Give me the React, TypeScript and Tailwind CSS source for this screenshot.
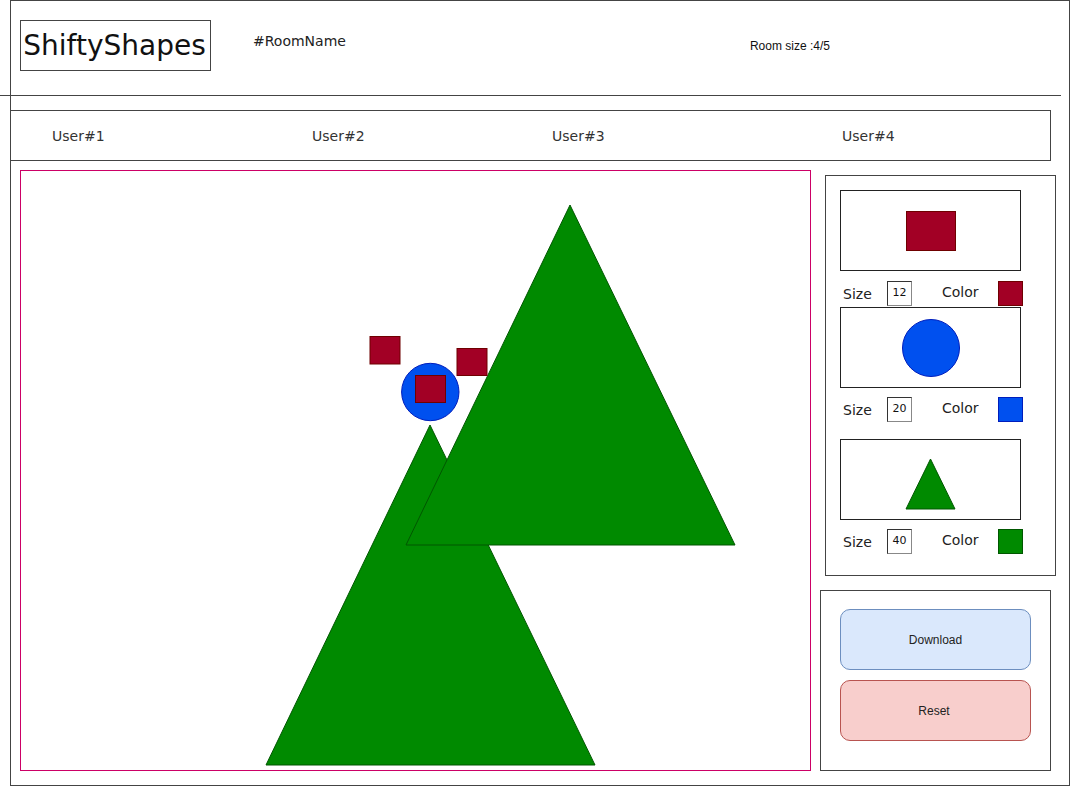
import React from 'react';

const sans = { fontFamily: '"DejaVu Sans", Verdana, sans-serif' };
const arial = { fontFamily: '"Liberation Sans", Arial, sans-serif' };

function SizeRow({ size, color }: { size: number; color: string }) {
  return (
    <div className="flex h-[25px] items-center text-[14px] text-[#222]" style={sans}>
      <span className="ml-[3px] w-[44px] pt-[1px]">Size</span>
      <span className="flex h-[25px] w-[25px] items-center justify-center border border-[#333] border-b-[#888] border-r-[#888] text-[11px] text-[#111]">
        {size}
      </span>
      <span className="ml-[30px] w-[56px] pb-[3px]">Color</span>
      <span className={`h-[25px] w-[25px] border ${color}`} />
    </div>
  );
}

export default function App() {
  return (
    <div className="relative h-[786px] w-[1071px] overflow-hidden bg-white text-[#222]">
      <div className="ml-[10px] h-[786px] w-[1060px] border border-[#444]">
        {/* header */}
        <div className="-ml-[11px] flex h-[95px] w-[1061px] items-start border-b border-[#444] pl-[11px]">
          <div
            className="ml-[9px] mt-[19px] flex h-[51px] w-[191px] items-center justify-center border border-[#444] pr-[2px] text-[28px] leading-none text-[#111]"
            style={sans}
          >
            ShiftyShapes
          </div>
          <span className="ml-[42px] mt-[30px] text-[14px]" style={sans}>
            #RoomName
          </span>
          <span className="ml-[404px] mt-[36px] text-[12px] text-[#111]" style={arial}>
            Room size :4/5
          </span>
        </div>

        {/* users */}
        <div
          className="-ml-px mt-[14px] flex h-[51px] w-[1041px] items-center border border-[#444] pl-[41px] pt-[2px] text-[14px] text-[#333]"
          style={sans}
        >
          <span className="w-[260px]">User#1</span>
          <span className="w-[240px]">User#2</span>
          <span className="w-[290px]">User#3</span>
          <span>User#4</span>
        </div>

        {/* main */}
        <div className="mt-[9px] flex items-start">
          <div className="ml-[9px] h-[601px] w-[791px] border border-[#cc0066]">
            <svg width="789" height="599" viewBox="21 171 789 599" className="block">
              <polygon points="430,425 266,765 595,765" fill="#008a00" stroke="#005700" />
              <polygon points="570,205 406,545 735,545" fill="#008a00" stroke="#005700" />
              <rect x="370" y="336.5" width="30" height="27.5" fill="#a20025" stroke="#6f0000" />
              <rect x="457" y="348.5" width="30" height="27" fill="#a20025" stroke="#6f0000" />
              <circle cx="430.3" cy="392" r="28.7" fill="#0050ef" stroke="#001dbc" />
              <rect x="415.5" y="375.5" width="30" height="27" fill="#a20025" stroke="#6f0000" />
            </svg>
          </div>

          <div className="flex flex-col">
            <div className="ml-[14px] mt-[5px] h-[401px] w-[231px] border border-[#444] pl-[14px] pt-[14px]">
              <div className="flex h-[81px] w-[181px] items-center justify-center border border-[#222]">
                <div className="h-[40px] w-[50px] border border-[#6f0000] bg-[#a20025]" />
              </div>
              <div className="mt-[10px]">
                <SizeRow size={12} color="border-[#6f0000] bg-[#a20025]" />
              </div>
              <div className="mt-[1px] flex h-[81px] w-[181px] items-center justify-center border border-[#222]">
                <div className="h-[58px] w-[58px] rounded-full border border-[#001dbc] bg-[#0050ef]" />
              </div>
              <div className="mt-[9px]">
                <SizeRow size={20} color="border-[#001dbc] bg-[#0050ef]" />
              </div>
              <div className="mt-[17px] flex h-[81px] w-[181px] items-end justify-center border border-[#222] pb-[9px]">
                <svg width="51" height="52" viewBox="0 0 51 52">
                  <polygon points="25.5,1 1,51 50,51" fill="#008a00" stroke="#005700" />
                </svg>
              </div>
              <div className="mt-[9px]">
                <SizeRow size={40} color="border-[#005700] bg-[#008a00]" />
              </div>
            </div>

            <div
              className="ml-[9px] mt-[14px] flex h-[181px] w-[231px] flex-col items-start gap-[10px] border border-[#444] pl-[19px] pt-[18px] text-[12px] text-[#222]"
              style={arial}
            >
              <button className="flex h-[61px] w-[191px] items-center justify-center rounded-[10px] border border-[#6c8ebf] bg-[#dae8fc]">
                Download
              </button>
              <button className="flex h-[61px] w-[191px] items-center justify-center rounded-[10px] border border-[#b85450] bg-[#f8cecc] pr-[3px]">
                Reset
              </button>
            </div>
          </div>
        </div>
      </div>
    </div>
  );
}
